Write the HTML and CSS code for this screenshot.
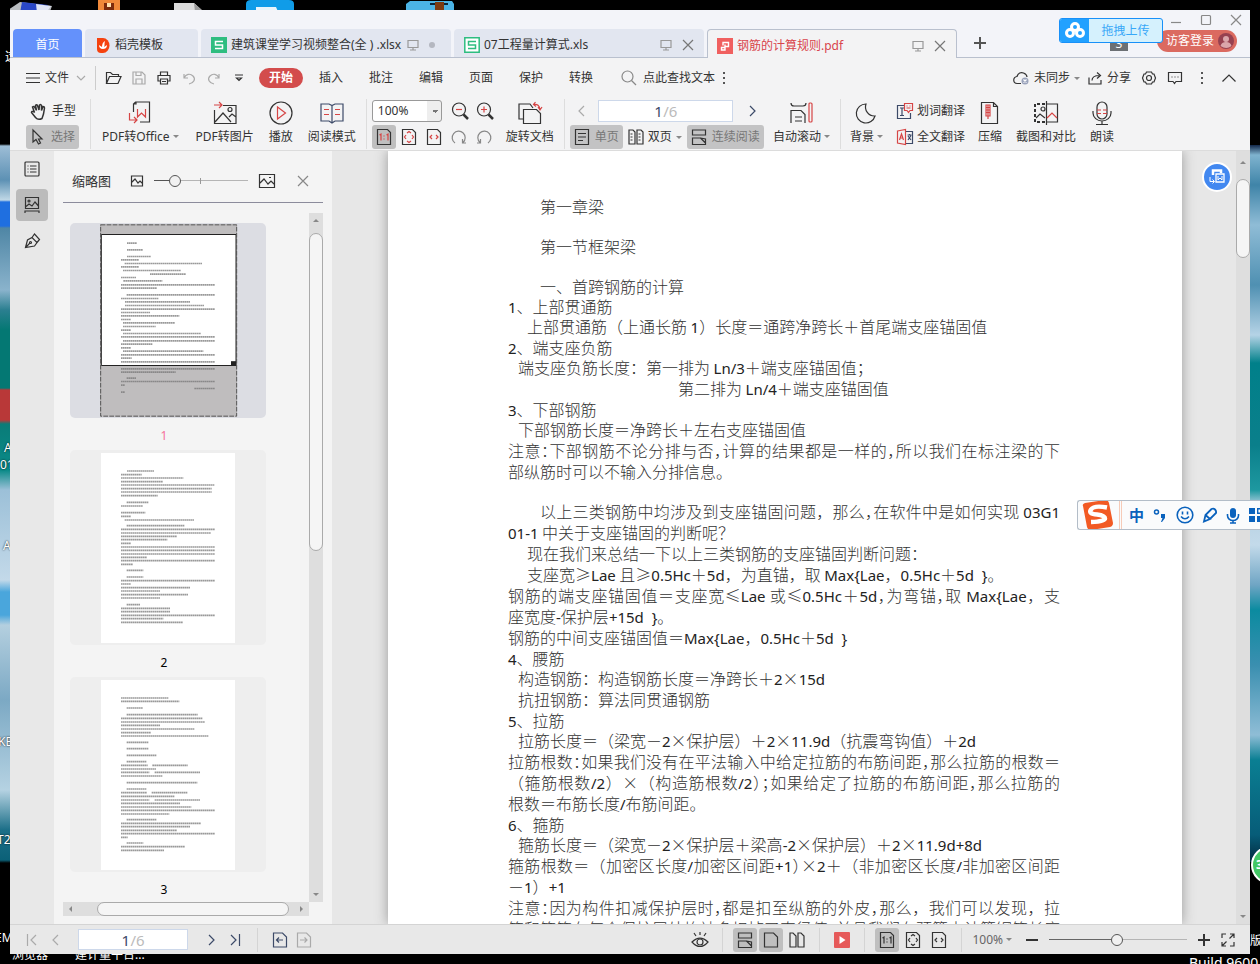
FILE: index.html
```html
<!DOCTYPE html>
<html lang="zh-CN">
<head>
<meta charset="utf-8">
<title>钢筋的计算规则.pdf</title>
<link rel="stylesheet" href="styles.css">
</head>
<body>
<div class="desktop">
  <svg class="desk-top" width="480" height="14" aria-hidden="true">
    <path d="M8 14V10l12-8 32 4-3 8z" fill="#b9bcc0"/><path d="M22 2l26 3-3 8H20z" fill="#2a48c8"/><path d="M36 4l15 2-5 7h-9z" fill="#dfe4f4"/>
    <rect x="98" y="-4" width="22" height="20" rx="3" fill="#f0893a"/><path d="M104 3h10v8h-10z" fill="#7c2b0c"/><path d="M107 3h4v4h-4z" fill="#ffe2b0"/>
    <path d="M174 3h20l10 9H174z" fill="#dcdcdc"/><path d="M194 3l10 9h-9z" fill="#9c9c9c"/>
    <path d="M246 14V4q0-4 5-4h38q5 0 5 4v10z" fill="#109ce8"/><path d="M256 7h20l3 7h-23z" fill="#e8f4fb"/>
    <path d="M406 14V4l4-3h42l2 3v10z" fill="#4bb4e6"/><path d="M430 3h18v2h-18z" fill="#08263a"/><path d="M435 2h9v12h-9z" fill="#7c3a10"/>
  </svg>
  <div class="edge edge-left"><span class="t1">这</span><span class="t2">A</span><span class="t3">01</span><span class="t4">A</span><span class="t5">KE</span><span class="t6">T2</span><span class="t7">EM</span></div>
  <div class="edge edge-right"></div>
  <span class="desk-label l1">浏览器</span><span class="desk-label l2">建计量平台...</span><span class="desk-label l3">Build 9600</span><span class="desk-label l4">版</span>
  <span class="green-ball">3</span>
</div>

<div class="window">
  <header class="tabs">
    <button class="tab home">首页</button>
    <button class="tab t-docer"><svg width="16" height="16"><path d="M2 1h6a6.500 7.500 0 0 1 0 15H6a4 4 0 0 1-4-4z" fill="#f5420f"/><path d="M8 12c-3 0-4-2-4-4l3 2c0-3 1-5 3-6-1 3 0 4-1 6l3-2c0 3-2 4-4 4z" fill="#fff"/></svg>稻壳模板</button>
    <button class="tab doc"><svg width="16" height="16"><path d="M0 0h16v16H0z" fill="#2ebd80"/><path d="M12 4.500H4.500V8h7v3.500H4" fill="none" stroke="#fff" stroke-width="1.500"/></svg>建筑课堂学习视频整合(全 ) .xlsx
      <svg class="ic screen" width="12" height="12"><path d="M1 1.500h10v7H1zM6 8.500v2M3 11h6"/></svg><i class="dot"></i></button>
    <button class="tab doc"><svg width="16" height="16"><path d="M.8.800h14.400v14.400H.8z" fill="#fff" stroke="#2ebd80" stroke-width="1.500"/><path d="M12 4.500H4.500V8h7v3.500H4" fill="none" stroke="#2ebd80" stroke-width="1.500"/></svg>07工程量计算式.xls
      <svg class="ic screen push" width="12" height="12"><path d="M1 1.500h10v7H1zM6 8.500v2M3 11h6"/></svg><svg class="ic close" width="12" height="12"><path d="M1 1l10 10M11 1L1 11"/></svg></button>
    <button class="tab doc active"><svg width="16" height="16"><path d="M0 0h16v16H0z" fill="#f0605f"/><path d="M6 7.500V4.500h5.500v4H8M8 6.500v5.500H4.500V9.500H8" fill="none" stroke="#fff" stroke-width="1.400"/></svg>钢筋的计算规则.pdf
      <svg class="ic screen push" width="12" height="12"><path d="M1 1.500h10v7H1zM6 8.500v2M3 11h6"/></svg><svg class="ic close" width="12" height="12"><path d="M1 1l10 10M11 1L1 11"/></svg></button>
    <button class="newtab" aria-label="新建"><svg class="ic thick" width="12" height="12"><path d="M6 0v12M0 6h12"/></svg></button>
    <div class="account">
      <div class="winbtns">
        <button aria-label="最小化"><svg class="ic" width="12" height="12"><path d="M1 8.500h10"/></svg></button>
        <button aria-label="最大化"><svg class="ic" width="12" height="12"><rect x="1.500" y="1.500" width="9" height="9" rx="1"/></svg></button>
        <button aria-label="关闭"><svg class="ic" width="12" height="12"><path d="M1 1l10 10M11 1L1 11"/></svg></button>
      </div>
      <div class="login-row"><span class="count">3</span><button class="login">访客登录<svg width="16" height="16"><circle cx="8" cy="8" r="8" fill="#974150"/><circle cx="8" cy="6" r="3" fill="#dba6ab"/><path d="M2.500 13q1-4 5.500-4t5.500 4q-5 4-11 0z" fill="#dba6ab"/></svg></button></div>
    </div>
  </header>

  <nav class="menu">
    <button class="file"><svg class="ic" width="14" height="12"><path d="M0 1.500h14M0 6h14M0 10.500h14"/></svg>文件<svg class="ic faint" width="10" height="6"><path d="M1 1l4 4 4-4"/></svg></button>
    <i class="vline"></i>
    <button class="sq" aria-label="打开"><svg class="ic" width="17" height="14"><path d="M1.500 12.500V1.500h4l2 2h6v2M1.500 12.500l3-7h11.500l-3 7z"/></svg></button>
    <button class="sq faint" aria-label="保存"><svg class="ic" width="14" height="14"><path d="M1 1h9l3 3v9H1zM4 1v3.500h5V1M4 13V8h6v5"/></svg></button>
    <button class="sq" aria-label="打印"><svg class="ic" width="14" height="14"><path d="M3.500 4V1h7v3M3.500 10H1V4.500h12V10h-2.500M3.500 8h7v5h-7zM5 10.500h4"/></svg></button>
    <button class="sq faint" aria-label="撤销"><svg class="ic" width="12" height="13"><path d="M1 2v4h4M1 6c2-4 6-5 9-2s1 7-4 8"/></svg></button>
    <button class="sq faint" aria-label="恢复"><svg class="ic" width="12" height="13"><path d="M11 2v4H7M11 6C9 2 5 1 2 4s-1 7 4 8"/></svg></button>
    <button class="sq" aria-label="更多"><svg class="ic" width="8" height="8"><path d="M0 1h8M1.500 4L4 6.500 6.500 4z"/></svg></button>
    <button class="start">开始</button>
    <button class="item">插入</button><button class="item">批注</button><button class="item">编辑</button><button class="item">页面</button><button class="item">保护</button><button class="item">转换</button>
    <label class="search"><svg class="ic grey" width="16" height="16"><circle cx="6.500" cy="6.500" r="5.500"/><path d="M10.500 10.500L15 15"/></svg><input type="text" placeholder="点此查找文本" aria-label="查找文本"></label>
    <svg width="3" height="13" fill="#555"><path d="M0 0h2v2H0zM0 5h2v2H0zM0 10h2v2H0z"/></svg>
    <div class="tools">
      <button><svg class="ic" width="17" height="14"><path d="M8 12.500H4.500A3.500 3.500 0 0 1 4 5.500C5 2 8 1 10.500 2S14 5 14 6"/><circle cx="12" cy="10" r="3.500" fill="#9aa3bb" stroke="none"/><path d="M10.500 8.500l3 3m0-3l-3 3" stroke="#fff"/></svg>未同步<i class="caret"></i></button>
      <button class="share"><svg class="ic" width="15" height="14"><path d="M1 6.500V13h12V9M4 9.500c0-4 3-5 7.500-5M9 1.500l3.500 3L9 7.500"/></svg>分享</button>
      <button aria-label="设置"><svg class="ic" width="14" height="14"><path d="M4.500 1h5l1 2h1.500l1.500 4-1.500 4h-1.500l-1 2h-5l-1-2H2L.5 7 2 3h1.500z"/><circle cx="7" cy="7" r="2.500"/></svg></button>
      <button aria-label="反馈"><svg class="ic" width="14" height="13"><path d="M.5.500h13v9H8l-1.500 2-1.500-2H.5zM3.500 5h1M6.500 5h1M9.500 5h1"/></svg></button>
      <button aria-label="菜单"><svg width="3" height="12" fill="#555"><path d="M0 0h2v2H0zM0 5h2v2H0zM0 10h2v2H0z"/></svg></button>
      <button aria-label="收起"><svg class="ic" width="14" height="8"><path d="M.5 7.500L7 1l6.500 6.500"/></svg></button>
    </div>
  </nav>

  <section class="ribbon">
    <div class="rows">
      <div class="row"><button class="mini"><svg class="ic bold" width="17" height="17"><path d="M5.500 14.500L1.500 9.500q0-1.500 2-1l1 1L2.500 4q1-1 2 0L6.500 7.500 5.500 2.500q1-1.500 2 0L9 7l.5-5q1.500-1 2 .5V7.500l1.500-4q1.500 0 1.500 1.500l-1 6-1.500 4.500q-4 2-6.500-1z"/></svg>手型</button></div>
      <div class="row"><button class="mini on"><svg class="ic" width="16" height="16"><path d="M3 1v12l3-2.500L8.500 15l2-1-2-4H12z"/></svg>选择</button></div>
    </div>
    <i class="sep"></i>
    <button class="big first"><svg class="ic" width="24" height="24"><path d="M5.500 11V3l2-2h14v20H12M5.500 6.500V3H8V1"/><path class="red" d="M9.500 8v8l4-4 4 4V8M1.500 12v7h7M6 16l3 3-3 3"/></svg><span>PDF转Office<i class="caret"></i></span></button>
    <button class="big far"><svg class="ic" width="24" height="24"><path d="M10 4.500h13v18H1.500V9M2 21l8-9 8 9M23 16l-4-3-3 3"/><circle cx="17" cy="8.500" r="2"/><path class="red" d="M1 4h8M6 1l3 3-3 3"/></svg><span>PDF转图片</span></button>
    <button class="big"><svg class="ic" width="24" height="24"><circle cx="12" cy="12" r="11"/><path class="red" d="M8.500 6v12l8-6z"/></svg><span>播放</span></button>
    <button class="big read"><svg class="ic" width="24" height="24"><path d="M1 3h8l3 1.500L15 3h8v17h-8l-3 2-3-2H1zM12 4.500V22"/><path class="red" d="M4 8.500h5M4 13.500h5M15 8.500h5M15 13.500h5"/></svg><span>阅读模式</span></button>
    <i class="sep"></i>
    <div class="rows">
      <div class="row"><select class="zoom" aria-label="缩放"><option>100%</option></select>
        <button class="cell" aria-label="缩小"><svg class="ic" width="18" height="18"><circle cx="8" cy="7.500" r="6.500"/><path d="M12.500 12.500L17 17" stroke-width="2.500"/><path class="red" d="M5 7.500h6"/></svg></button>
        <button class="cell" aria-label="放大"><svg class="ic" width="18" height="18"><circle cx="8" cy="7.500" r="6.500"/><path d="M12.500 12.500L17 17" stroke-width="2.500"/><path class="red" d="M5 7.500h6M8 4.500v6"/></svg></button></div>
      <div class="row">
        <button class="cell on" aria-label="实际大小"><svg class="ic" width="16" height="16"><path d="M1.500.500h10l3 3v12h-13z"/><path class="red" d="M3.500 6L5 5v6.500M10.500 6L12 5v6.500M8 6.500v1M8 9.500v1"/></svg></button>
        <button class="cell" aria-label="适合页面"><svg class="ic" width="16" height="16"><path d="M1.500.500h10l3 3v12h-13z"/><path class="red" d="M6 4l2-1.500L10 4M6 12l2 1.500 2-1.500M5 6L3.500 8 5 10M11 6l1.500 2-1.500 2"/></svg></button>
        <button class="cell" aria-label="适合宽度"><svg class="ic" width="16" height="16"><path d="M1.500.500h10l3 3v12h-13z"/><path class="red" d="M6 6L4 8l2 2M10 6l2 2-2 2"/></svg></button>
        <button class="cell" aria-label="左旋"><svg class="ic grey" width="16" height="16"><path d="M4 14A6.500 6.500 0 1 1 12 13.500M11.500 10v4h3.500"/></svg></button>
        <button class="cell" aria-label="右旋"><svg class="ic grey" width="16" height="16"><path d="M12 14A6.500 6.500 0 1 0 4 13.500M4.500 10v4H1"/></svg></button></div>
    </div>
    <button class="big rot"><svg class="ic" width="24" height="24"><path d="M5 18H1V3h11l3 4M5.500 8.500h13l4 4v10h-17z"/><path class="red" d="M17.500 1l-2 2.500 2.500 2M16 3.500q5-1 6 5M20 6l2 3 2-3"/></svg><span>旋转文档</span></button>
    <i class="sep"></i>
    <div class="rows">
      <div class="row nav"><button class="cell faint" aria-label="上一页"><svg class="ic" width="8" height="12"><path d="M6 1L1 6l5 5"/></svg></button>
        <label class="pageno"><input type="text" value="1" aria-label="页码"><span>/6</span></label>
        <button class="cell blue" aria-label="下一页"><svg class="ic" width="8" height="12"><path d="M2 1l5 5-5 5"/></svg></button></div>
      <div class="row gap4"><button class="mini on"><svg class="ic" width="16" height="16"><path d="M1.500.500h13v15h-13zM4 4.500h8M4 8h8M4 11.500h5"/></svg>单页</button>
        <button class="mini plain"><svg class="ic" width="16" height="16"><path d="M1 1h4l2 2v12H1zM9 1h4l2 2v12H9zM2.500 5h2M2.500 8h2M2.500 11h2M10.500 5h2M10.500 8h2M10.500 11h2"/></svg>双页<i class="caret"></i></button>
        <button class="mini on"><svg class="ic" width="16" height="16"><path d="M1.500 1h13v5h-13zM14.500 10v5.500h-13V9h8zM9.500 9l5 5"/></svg>连续阅读</button></div>
    </div>
    <button class="big rot"><svg class="ic" width="24" height="24"><path d="M2 2q0 3 3 3h9q3 0 3-3M2 22V9.500h10l4 4V22M6 16h7M6 20h7"/><rect class="red" x="20" y="2" width="3" height="19" rx="1"/></svg><span>自动滚动<i class="caret"></i></span></button>
    <i class="sep"></i>
    <button class="big moon"><svg class="ic" width="24" height="24"><path d="M12 3A9.500 9.500 0 1 0 21 15 9 9 0 0 1 12 3z"/></svg><span>背景<i class="caret"></i></span></button>
    <div class="rows">
      <div class="row"><button class="mini plain blue"><svg class="ic" width="16" height="16"><path d="M7 2.500H.5v13h13V10M3 5h4M3 12.500h4M5 5v7.500"/><path class="red" d="M7.500.500h8v7H13l-1.500 2L10 7.500H7.500zM9.500 3h1M12.500 3h1M9.500 5h4"/></svg>划词翻译</button></div>
      <div class="row"><button class="mini plain blue"><svg class="ic" width="16" height="16"><path d="M9 2.500h6.500v12H9M10.500 6h4M12.500 5v1M11 11l3-4.500M11 7l3 4"/><path class="red" d="M.5 2L8.500.500v15L.5 14zM2.500 11L4.500 5l2 6M3 9h3"/></svg>全文翻译</button></div>
    </div>
    <button class="big"><svg class="ic" width="24" height="24"><path d="M3.500 1.500h12l4 4v17h-16zM15.500 1.500v4h4"/><path class="red" d="M8 4h4v11H8zM8 6.500h4M8 9h4M8 11.500h4M10 4v14"/></svg><span>压缩</span></button>
    <button class="big near"><svg class="ic" width="24" height="24"><path d="M11 3H1v18h10" stroke-dasharray="3 2" stroke-width="2"/><path d="M12.500 0v24M13 3h10.500v18H13M2 17l4-4 5 4" /><circle cx="9" cy="8" r="2"/><path class="red" d="M13 17l5-5 5 5"/></svg><span>截图和对比</span></button>
    <button class="big near"><svg class="ic" width="24" height="24"><rect x="7" y="1" width="10" height="17" rx="5"/><path d="M3 10v2a9 8 0 0 0 18 0v-2M12 20v3M6 23.500h12"/><path class="red" d="M7 9h4M13 9h4M7 12.500h4M13 12.500h4"/></svg><span>朗读</span></button>
  </section>

  <main class="body">
    <aside class="rail">
      <button aria-label="目录"><svg class="ic" width="16" height="16"><rect x="1" y="1" width="14" height="14" rx="1"/><path d="M3.500 5h1M6 5h6.500M3.500 8h1M6 8h6.500M3.500 11h1M6 11h6.500"/></svg></button>
      <button class="on" aria-label="缩略图"><svg class="ic" width="16" height="18"><path d="M1.500 1.500h13v11h-13zM2 10.500l3-2.500 3 2 3-4 3.500 4M1 17v-2h14v2"/><circle cx="5" cy="5" r="1"/></svg></button>
      <button aria-label="签名"><svg class="ic" width="16" height="16"><path d="M1.500 14.500l2-7.500L8 4.500l5 5L10.500 13zM8 4.500L10.500 1l5 5.500L13 9.500M2 14l4-4"/><circle cx="6.500" cy="9.500" r="1"/></svg></button>
    </aside>
    <aside class="panel">
      <header class="panel-head"><h2>缩略图</h2>
        <svg class="ic" width="12" height="12"><path d="M.5 1h11v10H.5zM1 7l3-3 3 4 2-2 2 2"/></svg>
        <input class="range small" type="range" min="0" max="100" value="18" aria-label="缩略图大小">
        <svg class="ic" width="16" height="14"><path d="M.5.500h15v13H.5zM1 9l4-4 4 5 3-3 3 3M10 3.500h2"/></svg>
        <button aria-label="关闭面板"><svg class="ic grey" width="12" height="12"><path d="M1 1l10 10M11 1L1 11"/></svg></button></header>
      <div class="list">
        <figure class="thumb current"><div><svg viewBox="300 225 411 578" width="137" height="193"><path fill="#bfbdbe" d="M300 225h411v578H300z"/><path fill="#fff" stroke="#222" stroke-width="3" d="M304 256h404v393H304z"/><path fill="none" stroke="#555" stroke-width="3" stroke-dasharray="14 4" d="M302 227h408v574H302z"/><path fill="#222" d="M693 636h15v13h-15z"/>
<path class="lines" d="M381 282h30M381 302h48M381 322h72M363 332h54M374 343h232M363 353h54M369 364h174M450 375h107M363 385h45M370 395h117M363 407h282M363 417h107M380 437h265M363 448h112M375 458h195M375 469h237M363 480h282M363 490h87M363 500h175M363 511h29M369 521h156M369 532h98M363 543h29M369 553h233M363 563h282M369 575h276M363 585h94M363 596h29M369 606h241M363 617h282M363 627h32M363 638h282M363 659h282M363 669h164M380 687h28M363 697h282M363 708h12M583 718h62M363 729h12"/></svg></div><figcaption>1</figcaption></figure>
        <figure class="thumb"><div><svg viewBox="303 39 402 570" width="134" height="190"><path fill="#fff" d="M303 39h402v570H303z"/>
<path class="lines" d="M381 93h81M363 104h62M363 114h187M363 125h125M363 135h280M363 146h272M363 156h272M363 167h110M380 187h65M363 198h66M363 218h73M363 229h29M374 240h208M380 257h173M363 268h282M363 279h270M363 289h167M363 299h139M363 310h29M363 321h282M363 331h282M363 342h282M363 352h77M363 362h282M363 373h35M380 391h50M380 411h50M363 422h282M363 432h29M363 443h207M363 453h117M363 464h201M363 474h117M380 494h40M363 505h147M363 515h147M363 526h282M363 536h127M363 547h186"/></svg></div><figcaption>2</figcaption></figure>
        <figure class="thumb"><div><svg viewBox="303 30 402 570" width="134" height="190"><path fill="#fff" d="M303 30h402v570H303z"/>
<path class="lines" d="M363 84h142M363 94h175M380 114h49M380 134h213M363 145h244M363 156h252M363 166h117M363 177h220M363 188h90M363 198h262M380 217h65M380 236h65M380 256h90M380 275h60M363 286h80M457 286h106M363 297h105M363 307h85M464 307h136M363 318h124M380 338h212M380 357h60M363 368h77M455 368h108M363 379h160M363 390h85M464 390h136M363 400h177M363 411h211M363 421h282M363 432h145M380 449h90M363 460h240M363 470h207M363 481h167M363 491h282M363 502h20M380 519h50M363 530h192M363 541h129"/></svg></div><figcaption>3</figcaption></figure>
      </div>
      <div class="vbar"><i class="up"></i><b></b><i class="down"></i></div>
      <div class="hbar"><i class="left"></i><b></b><i class="right"></i></div>
    </aside>
    <section class="canvas">
      <article class="page">
        <h1>第一章梁</h1>
        <h1>第一节框架梁</h1>
        <h2>一、首跨钢筋的计算</h2>
        <h3><span class="n">1</span>、上部贯通筋</h3>
        <p class="in2">上部贯通筋（上通长筋 <span class="n">1</span>）长度＝通跨净跨长＋首尾端支座锚固值</p>
        <h3><span class="n">2</span>、端支座负筋</h3>
        <p class="in1">端支座负筋长度：第一排为 <span class="n">Ln/3</span>＋端支座锚固值；</p>
        <p class="in4">第二排为 <span class="n">Ln/4</span>＋端支座锚固值</p>
        <h3><span class="n">3</span>、下部钢筋</h3>
        <p class="in1">下部钢筋长度＝净跨长＋左右支座锚固值</p>
        <p class="full">注意<span class="h">：</span>下部钢筋不论分排与否<span class="h">，</span>计算的结果都是一样的<span class="h">，</span>所以我们在标注梁的下</p>
        <p class="last">部纵筋时可以不输入分排信息。</p>
        <p class="full in3">以上三类钢筋中均涉及到支座锚固问题，那么<span class="h">，</span>在软件中是如何实现 <span class="n">03G1</span></p>
        <p><span class="n">01-1</span> 中关于支座锚固的判断呢？</p>
        <p class="in2">现在我们来总结一下以上三类钢筋的支座锚固判断问题：</p>
        <p class="in2">支座宽≥<span class="n">Lae</span> 且≥<span class="n">0.5Hc</span>＋<span class="n">5d</span>，为直锚，取 <span class="n">Max{Lae</span>，<span class="n">0.5Hc</span>＋<span class="n">5d&nbsp; }</span>。</p>
        <p class="full">钢筋的端支座锚固值＝支座宽≤<span class="n">Lae</span> 或≤<span class="n">0.5Hc</span>＋<span class="n">5d</span><span class="h">，</span>为弯锚<span class="h">，</span>取 <span class="n">Max{Lae</span>，支</p>
        <p>座宽度<span class="n">-</span>保护层<span class="n">+15d&nbsp; }</span>。</p>
        <p>钢筋的中间支座锚固值＝<span class="n">Max{Lae</span>，<span class="n">0.5Hc</span>＋<span class="n">5d&nbsp; }</span></p>
        <h3><span class="n">4</span>、腰筋</h3>
        <p class="in1">构造钢筋：构造钢筋长度＝净跨长＋<span class="n">2</span>×<span class="n">15d</span></p>
        <p class="in1">抗扭钢筋：算法同贯通钢筋</p>
        <h3><span class="n">5</span>、拉筋</h3>
        <p class="in1">拉筋长度＝（梁宽－<span class="n">2</span>×保护层）＋<span class="n">2</span>×<span class="n">11.9d</span>（抗震弯钩值）＋<span class="n">2d</span></p>
        <p class="full">拉筋根数<span class="h">：</span>如果我们没有在平法输入中给定拉筋的布筋间距<span class="h">，</span>那么拉筋的根数＝</p>
        <p class="full">（箍筋根数<span class="n">/2</span>）×（构造筋根数<span class="n">/2</span><span class="h">）；</span>如果给定了拉筋的布筋间距<span class="h">，</span>那么拉筋的</p>
        <p>根数＝布筋长度<span class="n">/</span>布筋间距。</p>
        <h3><span class="n">6</span>、箍筋</h3>
        <p class="in1">箍筋长度＝（梁宽－<span class="n">2</span>×保护层＋梁高<span class="n">-2</span>×保护层）＋<span class="n">2</span>×<span class="n">11.9d+8d</span></p>
        <p class="full">箍筋根数＝（加密区长度<span class="n">/</span>加密区间距<span class="n">+1</span><span class="h">）</span>×<span class="n">2</span>＋（非加密区长度<span class="n">/</span>非加密区间距</p>
        <p>－<span class="n">1</span>）<span class="n">+1</span></p>
        <p class="full">注意<span class="h">：</span>因为构件扣减保护层时<span class="h">，</span>都是扣至纵筋的外皮<span class="h">，</span>那么，我们可以发现，拉</p>
        <p class="tail">筋和箍筋在每个保护层处均被多扣掉了直径值<span class="h">，</span>并且我们在预算中计算钢筋长度</p>
      </article>
      <button class="convert" aria-label="转换"><svg width="16" height="16" fill="none" stroke="#fff"><path d="M4 6V1.500h8V4" stroke-width="2.500"/><path d="M7 5h8v8H7z" fill="#4288f0" stroke-width="1.300"/><path d="M9 7v4l2-2 2 2V7M1 8v4.500h4M3.500 10.500l2 2-2 2"/></svg></button>
      <div class="vbar main"><i class="up"></i><b></b><i class="down"></i></div>
    </section>
  </main>

  <footer class="status">
    <button class="cell faint" aria-label="首页"><svg class="ic" width="12" height="12"><path d="M1.500 0v12M10 1L5 6l5 5"/></svg></button>
    <button class="cell faint" aria-label="上一页"><svg class="ic" width="8" height="12"><path d="M6 1L1 6l5 5"/></svg></button>
    <label class="pageno"><input type="text" value="1" aria-label="当前页"><span>/6</span></label>
    <button class="cell blue" aria-label="下一页"><svg class="ic" width="8" height="12"><path d="M2 1l5 5-5 5"/></svg></button>
    <button class="cell blue" aria-label="末页"><svg class="ic" width="12" height="12"><path d="M10.500 0v12M2 1l5 5-5 5"/></svg></button>
    <i class="sep"></i>
    <button class="cell blue" aria-label="后退"><svg class="ic" width="16" height="16"><path d="M1.500 1h9l4 4v10h-13zM4 8h7M7 5.500L4.500 8 7 10.500"/></svg></button>
    <button class="cell faint" aria-label="前进"><svg class="ic" width="16" height="16"><path d="M1.500 1h9l4 4v10h-13zM4 8h7M8.500 5.500L11 8l-2.500 2.500"/></svg></button>
    <div class="status-right">
      <button class="cell" aria-label="护眼"><svg class="ic" width="18" height="16"><path d="M1 10q8-8 16 0-8 9-16 0zM9 0v3M3 1l2 3M15 1l-2 3"/><circle cx="9" cy="10" r="3"/></svg></button>
      <i class="sep"></i>
      <button class="cell on" aria-label="连续"><svg class="ic" width="16" height="16"><path d="M1.500 1h13v5h-13zM14.500 10v5.500h-13V9h8zM9.500 9l5 5"/></svg></button>
      <button class="cell on" aria-label="单页"><svg class="ic" width="16" height="16"><path d="M1.500 1h9l4 4v10h-13z"/></svg></button>
      <button class="cell" aria-label="双页"><svg class="ic" width="16" height="16"><path d="M1 1h3l3 3v11H1zM9 1h3l3 3v11H9z"/></svg></button>
      <i class="sep"></i>
      <button class="cell" aria-label="播放"><svg width="16" height="18"><rect y="1" width="16" height="16" rx="1" fill="#e65a5a"/><path d="M5.500 5v8l6-4z" fill="#fff"/></svg></button>
      <i class="sep"></i>
      <button class="cell on" aria-label="实际大小"><svg class="ic" width="16" height="16"><path d="M1.500.500h10l3 3v12h-13zM3.500 6L5 5v6.500M10.500 6L12 5v6.500M8 6.500v1M8 9.500v1"/></svg></button>
      <button class="cell" aria-label="适合页面"><svg class="ic" width="16" height="16"><path d="M1.500.500h10l3 3v12h-13zM6 4l2-1.500L10 4M6 12l2 1.500 2-1.500M5 6L3.500 8 5 10M11 6l1.500 2-1.500 2"/></svg></button>
      <button class="cell" aria-label="适合宽度"><svg class="ic" width="16" height="16"><path d="M1.500.500h10l3 3v12h-13zM6 6L4 8l2 2M10 6l2 2-2 2"/></svg></button>
      <i class="sep"></i>
      <button class="pct">100%<i class="caret"></i></button>
      <button class="cell" aria-label="缩小"><svg class="ic thick" width="12" height="12"><path d="M0 6h12"/></svg></button>
      <input class="range" type="range" min="0" max="100" value="49" aria-label="缩放比例">
      <div class="pair"><button class="cell" aria-label="放大"><svg class="ic thick" width="12" height="12"><path d="M6 0v12M0 6h12"/></svg></button>
      <button class="cell" aria-label="全屏"><svg class="ic" width="14" height="14"><path d="M1 5V1h4M13 9v4H9M9 1h4v4M5 13H1V9M13 1L8.500 5.500M1 13l4.500-4.500"/></svg></button></div>
    </div>
  </footer>
</div>

<button class="upload"><span class="logo"><svg width="20" height="16" fill="none" stroke="#fff" stroke-width="3"><circle cx="10" cy="5" r="3.500"/><circle cx="5" cy="11" r="3.500"/><circle cx="15" cy="11" r="3.500"/></svg></span><span class="txt">拖拽上传</span></button>

<div class="ime">
  <svg width="31" height="30"><path d="M1 6Q0 4 3 3L23 0q3 0 4 3l4 20q0 3-3 4L9 30q-3 0-4-3z" fill="#f25a24"/><path d="M25 7.500Q12 5 9 9.500t6 5q8 1 8 4T9 22" fill="none" stroke="#fff" stroke-width="4.500"/></svg>
  <i></i><button>中</button>
  <button aria-label="标点"><svg width="14" height="14"><circle cx="3.500" cy="4" r="2" fill="none" stroke="#0a62bd" stroke-width="1.500"/><path d="M8 6h4v4l-3 4H8l1.500-4H8z" fill="#0a62bd"/></svg></button>
  <button aria-label="表情"><svg width="18" height="18" fill="none" stroke="#0a62bd" stroke-width="1.600"><circle cx="9" cy="9" r="7.800"/><path d="M6.500 5.500v3M11.500 5.500v3M5 10.500q4 4.500 8 0"/></svg></button>
  <button aria-label="手写"><svg width="14" height="16" fill="none" stroke="#0a62bd" stroke-width="1.800"><path d="M1 14.500L2.500 8 8.500 2q2-1 3.500.5t1 3.500L7 12zM2.500 8L7 12l-6 2.500"/></svg></button>
  <button aria-label="语音"><svg width="14" height="17"><rect x="4" y="1" width="6" height="10" rx="3" fill="#0a62bd"/><path d="M1.500 7v1.500a5.500 5 0 0 0 11 0V7M7 13v3M4 16h6" fill="none" stroke="#0a62bd" stroke-width="1.600"/></svg></button>
  <button aria-label="工具"><svg width="14" height="14" fill="#0a62bd"><path d="M0 0h6v6H0zM0 8h6v6H0zM8 8h6v6H8z"/><path d="M8.700.700h4.600v4.600H8.700z" fill="none" stroke="#0a62bd" stroke-width="1.400"/></svg></button>
</div>
</body>
</html>
```
FILE: styles.css
```css
* { box-sizing: border-box; }
body {
  margin: 0;
  height: 100vh;
  padding: 10px;
  position: relative;
  overflow: hidden;
  background: #000;
  color: #333;
  font: 12px/16px "Noto Sans", "Noto Sans CJK SC", sans-serif;
}
button {
  border: 0;
  padding: 0;
  background: none;
  color: inherit;
  font: inherit;
  display: flex;
  align-items: center;
  justify-content: center;
  white-space: nowrap;
}
svg { flex: none; overflow: visible; }
.ic { fill: none; stroke: currentColor; stroke-width: 1.2; }
.ic.thick { stroke-width: 2; }
.ic.bold { stroke-width: 1.5; }
.ic .red { stroke: #d64545; }
.grey { color: #888; }
.faint { color: #aaa; }
.blue { color: #3c4a68; }
.caret {
  flex: none;
  display: inline-block;
  margin-left: 3px;
  vertical-align: 3px;
  border: 3px solid transparent;
  border-top-color: #888;
  border-bottom: 0;
}

/* desktop behind the window */
.desktop { position: absolute; inset: 0; overflow: hidden; color: #fff; }
.desk-top { position: absolute; left: 0; top: 0; }
.edge { position: absolute; width: 10px; top: 145px; height: 717px; overflow: hidden; }
.edge-left { left: 0; top: 0; height: 100%; background: linear-gradient(#000 144px, #9dbdd6 146px, #5d91b4 180px, #c0d8e6 200px, #1f6fe0 202px, #1f6fe0 226px, #4f86a5 228px, #8ab3cc 290px, #2b7f90 310px, #047873 330px, #047873 388px, #b93838 390px, #b93838 420px, #0a7c78 424px, #0a8a88 470px, #9cc0d8 490px, #c3d9e9 580px, #4aa6dc 592px, #4aa6dc 615px, #b4cfdf 625px, #7ca9c4 700px, #b5d2e2 790px, #1c6f88 830px, #0b6178 860px, #000 863px); }
.edge-right { right: 0; background: linear-gradient(#13284a, #7fb3cf 10px, #3f84a8 40px, #8fbcd6 80px, #4f90b2 140px, #b5d3e6 190px, #00808a 218px, #0a7f8b 300px, #1e98a0 345px, #b5d0e2 360px, #c3daea 400px, #6fa5c4 440px, #0b8ba0 465px, #3a8fb0 520px, #8fbdd6 590px, #0a7f93 615px, #075c78 690px, #032d42 715px); }
.edge span { position: absolute; left: 0; font-size: 12px; line-height: 14px; text-shadow: 0 0 2px #000; }
.edge .t1 { top: 50px; left: 5px; }
.edge .t2 { top: 441px; left: 4px; }
.edge .t3 { top: 458px; }
.edge .t4 { top: 539px; left: 3px; }
.edge .t5 { top: 735px; left: -2px; }
.edge .t6 { top: 833px; left: -3px; }
.edge .t7 { top: 931px; left: -5px; }
.desk-label { position: absolute; bottom: 1px; line-height: 16px; white-space: nowrap; }
.l1 { left: 12px; }
.l2 { left: 75px; }
.l3 { left: 1189px; bottom: -9px; font-size: 14px; line-height: 20px; }
.l4 { left: 1250px; bottom: 15px; }
.green-ball { position: absolute; left: 1251px; top: 846px; width: 38px; height: 38px; border: 2px solid #fff; border-radius: 50%; background: #43c765; font: bold 12px/34px "Noto Sans", sans-serif; padding-left: 3px; }

.window { position: relative; height: 100%; display: flex; flex-direction: column; background: #f3f3f4; }

/* tab strip */
.tabs { display: flex; align-items: flex-end; gap: 3px; height: 48px; padding-left: 3px; background: #f3f4f9; border-bottom: 1px solid #b9c0ce; }
.tab { height: 28px; gap: 5px; padding: 3px 11px 0; border-radius: 4px 4px 0 0; background: #e2e6f0; justify-content: flex-start; }
.tab.home { width: 69px; background: #6491fb; color: #fff; justify-content: center; }
.t-docer { width: 113px; padding-left: 10px; gap: 4px; }
.doc { width: 250px; padding: 3px 10px 0; gap: 4px; }
.doc .screen { margin-left: 2px; color: #999; }
.doc .close { color: #777; }
.doc .push { margin-left: auto; margin-right: 6px; }
.doc .dot { width: 6px; height: 6px; margin-left: 6px; border-radius: 50%; background: #b4b7c0; }
.tab.active { height: 29px; padding-left: 9px; margin-bottom: -1px; background: #f3f3f4; border: 1px solid #b9c0ce; border-bottom: 0; color: #d9444c; }
.newtab { width: 24px; height: 28px; margin-left: 8px; color: #555; }
.account { margin-left: auto; align-self: stretch; padding-right: 8px; }
.winbtns { display: flex; justify-content: flex-end; gap: 18px; height: 20px; color: #888; }
.login-row { display: flex; align-items: center; gap: 29px; }
.count { width: 18px; height: 14px; margin-top: 6px; background: #6c7074; color: #fff; text-align: center; line-height: 14px; }
.login { gap: 4px; width: 80px; height: 22px; margin-right: 5px; padding-right: 3px; justify-content: flex-end; border-radius: 11px; background: #db6a60; color: #fff; }

/* menu */
.menu { display: flex; align-items: center; height: 38px; padding: 2px 14px 0 16px; }
.file { gap: 5px; }
.file .faint { margin-left: 2px; }
.vline { width: 1px; height: 24px; margin: 0 5px 0 9px; background: #ccc; }
.sq { width: 25px; height: 24px; }
.start { width: 44px; height: 20px; margin: 0 3px 0 8px; border-radius: 10px; background: #d34c4c; color: #fff; font-weight: bold; }
.item { width: 50px; height: 24px; }
.search { display: flex; align-items: center; gap: 6px; margin-left: 15px; }
.search input { width: 80px; border: 0; padding: 0; background: none; font: inherit; }
.search input::placeholder { color: #333; opacity: 1; }
.tools { display: flex; align-items: center; margin-left: auto; gap: 12px; }
.tools button { gap: 4px; min-width: 14px; }
.tools .caret { margin-left: 0; }
.tools .share { margin: 0 -1px 0 -4px; }
.tools button:nth-child(n+5) { margin-left: 1px; }

/* ribbon */
.ribbon { display: flex; height: 55px; padding: 3px 16px 0; border-bottom: 1px solid #dcdcdc; }
.rows { display: flex; flex-direction: column; gap: 2px; }
.row { display: flex; align-items: center; height: 24px; gap: 1px; }
.row.gap4 { gap: 4px; }
.sep { flex: none; width: 1px; height: 50px; margin: 0 5px 0 10px; background: #ddd; }
.big { flex-direction: column; justify-content: flex-start; padding-top: 2px; gap: 4px; margin-left: 15px; }
.big.first { margin-left: 6px; }
.big.moon { margin-left: 4px; }
.big.near { margin-left: 14px; }
.big.far { margin-left: 17px; }
.big.rot { margin-left: 10px; }
.big + .rows { margin-left: 13px; }
.rows + .big { margin-left: 12px; }
.rows + .big.rot { margin-left: 9px; }
.read svg { color: #3c4a68; }
.mini { height: 24px; gap: 5px; padding: 0 4px; border-radius: 3px; }
.mini.plain { padding: 0 1px; gap: 4px; }
.mini .caret { margin-left: 0; }
.mini.on { background: #c3c3c4; color: #777; }
.mini.on svg { color: #333; }
.mini.blue { color: #333; }
.mini.blue svg { color: #3c4a68; }
.cell { width: 24px; height: 24px; border-radius: 3px; }
.cell.on { background: #bfbfbf; }
.zoom { width: 70px; height: 22px; margin-right: 5px; padding: 0 5px; border: 1px solid #999; border-radius: 3px; appearance: none; color: #333; font: inherit; background: linear-gradient(to bottom right, #777 50%, transparent 50%) 62px 9px / 3px 3px no-repeat, linear-gradient(to bottom left, #777 50%, transparent 50%) 59px 9px / 3px 3px no-repeat, linear-gradient(90deg, #fff 54px, #eee 54px); }
.row.nav { justify-content: space-between; }
.nav .pageno { width: 135px; margin-right: 5px; margin-left: 3px; }
.pageno { display: flex; align-items: center; justify-content: center; height: 22px; border: 1px solid #cdd8ea; background: #fff; color: #bbb; font-size: 15px; }
.pageno input { width: 9px; border: 0; padding: 0; background: none; color: #3c4a68; font: inherit; }

/* body */
.body { flex: 1; min-height: 0; display: flex; }
.rail { width: 44px; padding: 2px 6px; background: #e8e8e8; display: flex; flex-direction: column; gap: 4px; }
.rail button { width: 32px; height: 32px; border-radius: 4px; }
.rail .on { background: #bbb; }
.panel { width: 278px; padding: 0 9px 8px; background: #f4f4f4; display: grid; grid-template: 62px 1fr 14px / 1fr 14px; }
.panel-head { grid-column: 1 / 3; display: flex; align-items: center; gap: 11px; height: 52px; padding: 8px 14px 0 9px; border-bottom: 1px solid #8c8c9c; }
.panel-head h2 { margin: 0 9px 0 0; font-size: 13px; font-weight: normal; }
.panel-head button { margin-left: auto; }
.list { overflow: hidden; padding: 10px 43px 0 7px; }
.thumb { margin: 0; }
.thumb > div { height: 195px; display: flex; align-items: center; justify-content: center; border-radius: 5px; background: #eee; }
.thumb.current > div { background: #dcdde3; }
.thumb figcaption { height: 32px; padding-right: 8px; text-align: center; line-height: 36px; color: #000; }
.thumb.current figcaption { color: #f4719a; }
.lines { fill: none; stroke: #777; stroke-width: 5; stroke-dasharray: 5 1; opacity: .75; }
.vbar, .hbar { display: flex; align-items: center; justify-content: space-between; background: #dedede; }
.vbar { flex-direction: column; width: 14px; padding: 6px 0; }
.vbar b { width: 14px; height: 318px; margin: 11px 0 auto; border: 1px solid #aaa; border-radius: 7px; background: #f5f5f5; }
.hbar { padding: 0 6px; }
.hbar b { width: 192px; height: 14px; border: 1px solid #aaa; border-radius: 7px; background: #f5f5f5; margin-left: 14px; }
.vbar i, .hbar i { border: 3px solid transparent; }
.vbar .up { border-bottom-color: #888; border-top: 0; }
.vbar .down { border-top-color: #888; border-bottom: 0; }
.hbar .left { border-right-color: #888; border-left: 0; }
.hbar .right { border-left-color: #888; border-right: 0; }
.vbar.main { padding: 10px 0 6px; }
.vbar.main b { height: 79px; margin-top: 15px; }

/* document */
.canvas { flex: 1; min-width: 0; position: relative; display: flex; overflow: hidden; background: #e7e7e7; }
.canvas > .vbar { margin-left: auto; }
.page { flex: none; width: 794px; margin-left: 56px; padding: 45px 122px 0 120px; background: #fff; box-shadow: 0 0 12px #999; color: #333; font: 16px/21px "Noto Sans CJK SC", sans-serif; white-space: nowrap; }
.page h1, .page h2, .page h3, .page p { margin: 0; height: 21px; font-size: 16px; font-weight: 300; line-height: 21px; }
.page h1 { margin-bottom: 19px; text-indent: 32px; }
.page h2 { height: 20px; text-indent: 32px; }
.page h3 { height: 20px; }
.page .n { font: 15px/1px "Noto Sans", sans-serif; color: #222; }
.page .h { font-feature-settings: "halt"; }
.page .in1 { padding-left: 10px; }
.page .in2 { padding-left: 19px; }
.page .in3 { padding-left: 32px; }
.page .in4 { padding-left: 170px; }
.page .last { margin-bottom: 19px; }
.page .full { white-space: normal; text-align: justify; text-align-last: justify; }
.convert { position: absolute; right: 18px; top: 11px; width: 30px; height: 30px; border: 2px solid #fff; border-radius: 50%; background: #4288f0; }

/* status bar */
.status { display: flex; align-items: center; height: 30px; padding: 0 10px; border-top: 1px solid #d4d4d4; background: #e8e8e8; }
.status .pageno { width: 110px; margin: 0 11px 0 10px; height: 21px; }
.status .sep { height: 24px; margin: 0 10px; background: #d4d4d4; }
.status-right { display: flex; align-items: center; gap: 2px; margin-left: auto; }
.status-right .sep { margin: 0 8px; }
.pair { display: flex; }
.pct { color: #666; margin: 0 6px 0 0; }
.range { appearance: none; width: 138px; height: 14px; margin: 0 3px; background: linear-gradient(90deg, #666 50%, #b5b5b5 50%) center / 100% 1px no-repeat; }
.range::-webkit-slider-thumb { appearance: none; width: 12px; height: 12px; border: 1px solid #555; border-radius: 50%; background: #f1f1f1; }
.range.small { width: 94px; margin: 0; background: linear-gradient(#999, #999) 46px center / 1px 6px no-repeat, linear-gradient(90deg, #555 20%, #b5b5b5 20%) center / 100% 1px no-repeat; }

/* floating tools */
.upload { position: absolute; right: 97px; top: 18px; width: 104px; height: 25px; border: 1px solid #1890f8; border-radius: 3px; background: #d5f1fd; overflow: hidden; color: #38a8f8; }
.upload .logo { width: 29px; height: 25px; padding-top: 4px; background: #22a1ff; }
.upload .txt { flex: 1; text-align: center; }
.ime { position: absolute; right: 0; top: 500px; width: 183px; height: 30px; padding-left: 4px; display: flex; align-items: center; gap: 9px; overflow: hidden; border: 1px solid #b3bdc8; border-right: 0; border-radius: 3px 0 0 3px; background: #fafbfc; color: #0a62bd; }
.ime i { width: 3px; height: 28px; margin: 0 -2px 0 -3px; border: solid #f6cbb8; border-width: 0 1px; }
.ime i, .ime button { flex: none; }
.ime button { font-size: 15px; font-weight: bold; }
```
